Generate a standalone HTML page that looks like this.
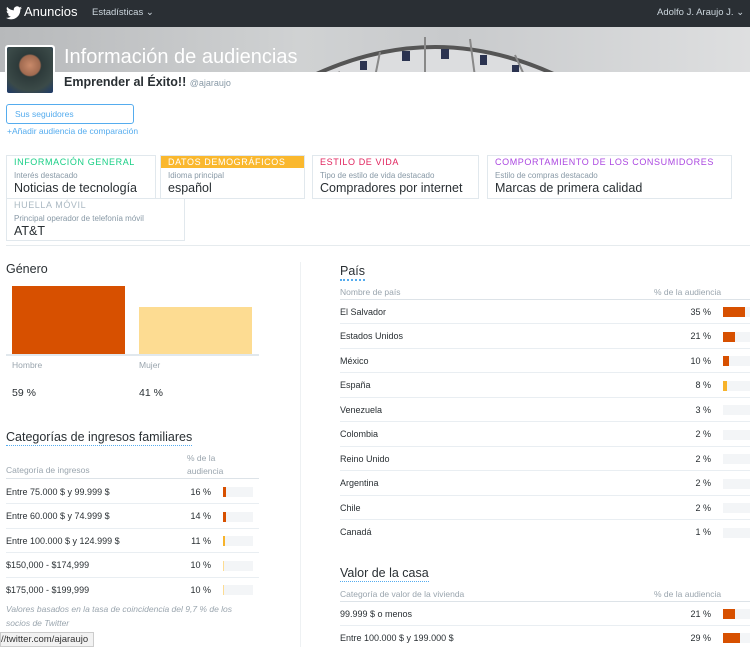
<!DOCTYPE html>
<html><head><meta charset="utf-8">
<style>
*{margin:0;padding:0;box-sizing:border-box}
body{width:750px;height:647px;overflow:hidden;background:#fff;font-family:"Liberation Sans",sans-serif;color:#292f33;position:relative}
.a{position:absolute;white-space:nowrap}
.card{position:absolute;border:1px solid #e1e8ed;background:#fff}
.card .h{font-size:9px;letter-spacing:.6px;height:12px;line-height:12px;padding-left:7px}
.card .s{font-size:8px;color:#8899a6;padding-left:7px;margin-top:3px}
.card .v{font-size:12.5px;color:#292f33;padding-left:7px;margin-top:1px}
.row{position:absolute;font-size:9px;color:#292f33;border-bottom:1px solid #e9eef2}
.trk{position:absolute;height:10px;background:#f3f5f7}
.bar{position:absolute;height:10px}
.or{background:#d75000}.ye{background:#f7b32b}.ly{background:#fddc92}
.hd{font-size:8.5px;color:#9aa5ae}
.ttl{font-size:12.5px;color:#292f33;border-bottom:1px dotted #55acee;padding-bottom:1px}
</style></head><body>
<div class="a" style="left:0;top:0;width:750px;height:27px;background:#2a2f34"></div>
<svg class="a" style="left:6px;top:6px" width="16" height="14" viewBox="0 0 24 20"><path fill="#fff" d="M24 2.4a10 10 0 0 1-2.8.8A5 5 0 0 0 23.3.4a10 10 0 0 1-3.1 1.2A4.9 4.9 0 0 0 11.8 6 14 14 0 0 1 1.7.9a4.9 4.9 0 0 0 1.5 6.6A4.900 4.900 0 0 1 1 6.9a4.900 4.900 0 0 0 3.9 4.8 5 5 0 0 1-2.2.1 4.900 4.900 0 0 0 4.600 3.400A9.900 9.900 0 0 1 0 17.300 14 14 0 0 0 7.500 19.500c9.100 0 14-7.500 14-14v-.6A10 10 0 0 0 24 2.400z"/></svg>
<div class="a" style="left:24px;top:4px;font-size:13px;color:#fff">Anuncios</div>
<div class="a" style="left:92px;top:7px;font-size:9.5px;color:#ccd6dd">Estadísticas ⌄</div>
<div class="a" style="left:657px;top:7px;font-size:9.5px;color:#ccd6dd">Adolfo J. Araujo J. ⌄</div>
<div class="a" style="left:0;top:27px;width:750px;height:45px;background:linear-gradient(90deg,#b7b9bb,#d0d2d3 40%,#c8cacc 60%,#dedfe0)"></div>
<svg class="a" style="left:290px;top:27px" width="290" height="45"><path d="M20 50 Q145 -10 270 50" fill="#dcdddf" stroke="#555" stroke-width="4"/><path d="M50 45 L40 50 M90 25 L85 50 M135 10 L135 50 M180 12 L185 50 M225 28 L235 50" stroke="#888" stroke-width="2"/><rect x="70" y="34" width="7" height="9" fill="#2b3350"/><rect x="112" y="24" width="8" height="10" fill="#2b3350"/><rect x="151" y="22" width="8" height="10" fill="#2b3350"/><rect x="190" y="28" width="7" height="10" fill="#2b3350"/><rect x="222" y="38" width="7" height="7" fill="#2b3350"/></svg>
<div class="a" style="left:5px;top:45px;width:50px;height:50px;background:#fff;border-radius:3px;padding:2px"><div style="width:46px;height:46px;border-radius:2px;background:radial-gradient(circle at 50% 40%,#c98a6a 0,#a06a50 28%,#2d3a3a 32%,#3b4a48 70%,#1d3a6a 100%)"></div></div>
<div class="a" style="left:64px;top:46px;font-size:20px;color:#fff">Información de audiencias</div>
<div class="a" style="left:64px;top:75px;font-size:12.5px;font-weight:bold">Emprender al Éxito!! <span style="font-weight:normal;font-size:9px;color:#8899a6">@ajaraujo</span></div>
<div class="a" style="left:6px;top:104px;width:128px;height:20px;border:1px solid #55acee;border-radius:3px;font-size:8.5px;color:#55acee;padding:4px 0 0 8px">Sus seguidores</div>
<div class="a" style="left:7px;top:126px;font-size:8.5px;color:#55acee">+Añadir audiencia de comparación</div>

<div class="card" style="left:6px;top:155px;width:150px;height:44px"><div class="h" style="color:#19cf86">INFORMACIÓN GENERAL</div><div class="s">Interés destacado</div><div class="v">Noticias de tecnología</div></div>
<div class="card" style="left:160px;top:155px;width:145px;height:44px"><div class="h" style="color:#fff;background:#fab82e">DATOS DEMOGRÁFICOS</div><div class="s">Idioma principal</div><div class="v">español</div></div>
<div class="card" style="left:312px;top:155px;width:167px;height:44px"><div class="h" style="color:#e0245e">ESTILO DE VIDA</div><div class="s">Tipo de estilo de vida destacado</div><div class="v">Compradores por internet</div></div>
<div class="card" style="left:487px;top:155px;width:245px;height:44px"><div class="h" style="color:#ab47e0">COMPORTAMIENTO DE LOS CONSUMIDORES</div><div class="s">Estilo de compras destacado</div><div class="v">Marcas de primera calidad</div></div>
<div class="card" style="left:6px;top:198px;width:179px;height:43px"><div class="h" style="color:#aab8c2">HUELLA MÓVIL</div><div class="s">Principal operador de telefonía móvil</div><div class="v">AT&amp;T</div></div>
<div class="a" style="left:6px;top:245px;width:744px;height:1px;background:#e6ebee"></div>
<div class="a" style="left:300px;top:262px;width:1px;height:385px;background:#eef1f3"></div>

<div class="a" style="left:6px;top:262px;font-size:12.5px">Género</div>
<div class="a or" style="left:12px;top:286px;width:113px;height:68px"></div>
<div class="a ly" style="left:139px;top:307px;width:113px;height:47px"></div>
<div class="a" style="left:6px;top:354px;width:253px;height:2px;background:#e1e8ed"></div>
<div class="a hd" style="left:12px;top:360px">Hombre</div>
<div class="a hd" style="left:139px;top:360px">Mujer</div>
<div class="a" style="left:12px;top:387px;font-size:10.5px">59 %</div>
<div class="a" style="left:139px;top:387px;font-size:10.5px">41 %</div>

<div class="a ttl" style="left:6px;top:430px">Categorías de ingresos familiares</div>
<div class="a hd" style="left:187px;top:452px;line-height:13px">% de la<br>audiencia</div>
<div class="a hd" style="left:6px;top:465px">Categoría de ingresos</div>
<div class="a" style="left:6px;top:478px;width:253px;height:1px;background:#dde3e8"></div>
<div id="inc"></div>
<div class="a" style="left:6px;top:602px;font-size:8.5px;color:#9aa5ae;font-style:italic;line-height:14px">Valores basados en la tasa de coincidencia del 9,7 % de los<br>socios de Twitter</div>
<div class="a" style="left:0;top:632px;width:94px;height:15px;background:#f2f2f2;border:1px solid #ccc;font-size:9.5px;color:#333;padding:1px 0 0 0">//twitter.com/ajaraujo</div>

<div class="a ttl" style="left:340px;top:264px;border-bottom-width:2px">País</div>
<div class="a hd" style="left:340px;top:287px">Nombre de país</div>
<div class="a hd" style="left:654px;top:287px">% de la audiencia</div>
<div class="a" style="left:340px;top:299px;width:410px;height:1px;background:#dde3e8"></div>
<div id="cty"></div>

<div class="a ttl" style="left:340px;top:566px">Valor de la casa</div>
<div class="a hd" style="left:340px;top:589px">Categoría de valor de la vivienda</div>
<div class="a hd" style="left:654px;top:589px">% de la audiencia</div>
<div class="a" style="left:340px;top:601px;width:410px;height:1px;background:#dde3e8"></div>
<div id="hv"></div>
<script>
function rows(id,data,x0,w,pr,bx,bw,y0,dy){var h='';data.forEach(function(d,i){var y=y0+i*dy;var last=i==data.length-1;
h+='<div class="row" style="left:'+x0+'px;top:'+(y-dy/2)+'px;width:'+w+'px;height:'+dy+'px;line-height:'+dy+'px;'+(last?'border-bottom:none':'')+'">'+d[0]+'</div>';
h+='<div class="a" style="left:'+(pr-40)+'px;width:40px;text-align:right;top:'+(y-dy/2)+'px;line-height:'+dy+'px;font-size:9px">'+d[1]+' %</div>';
h+='<div class="trk" style="left:'+bx+'px;top:'+(y-5)+'px;width:'+bw+'px"></div>';
if(d[2])h+='<div class="bar '+d[3]+'" style="left:'+bx+'px;top:'+(y-5)+'px;width:'+d[2]+'px"></div>';});
document.getElementById(id).outerHTML=h;}
rows('inc',[['Entre 75.000 $ y 99.999 $',16,3,'or'],['Entre 60.000 $ y 74.999 $',14,3,'or'],['Entre 100.000 $ y 124.999 $',11,2,'ye'],['$150,000 - $174,999',10,1,'ly'],['$175,000 - $199,999',10,1,'ly']],6,253,211,223,30,492,24.5);
rows('cty',[['El Salvador',35,22,'or'],['Estados Unidos',21,12,'or'],['México',10,6,'or'],['España',8,4,'ye'],['Venezuela',3,0],['Colombia',2,0],['Reino Unido',2,0],['Argentina',2,0],['Chile',2,0],['Canadá',1,0]],340,410,711,723,27,312,24.5);
rows('hv',[['99.999 $ o menos',21,12,'or'],['Entre 100.000 $ y 199.000 $',29,17,'or']],340,410,711,723,27,614,24);
</script>
</body></html>
